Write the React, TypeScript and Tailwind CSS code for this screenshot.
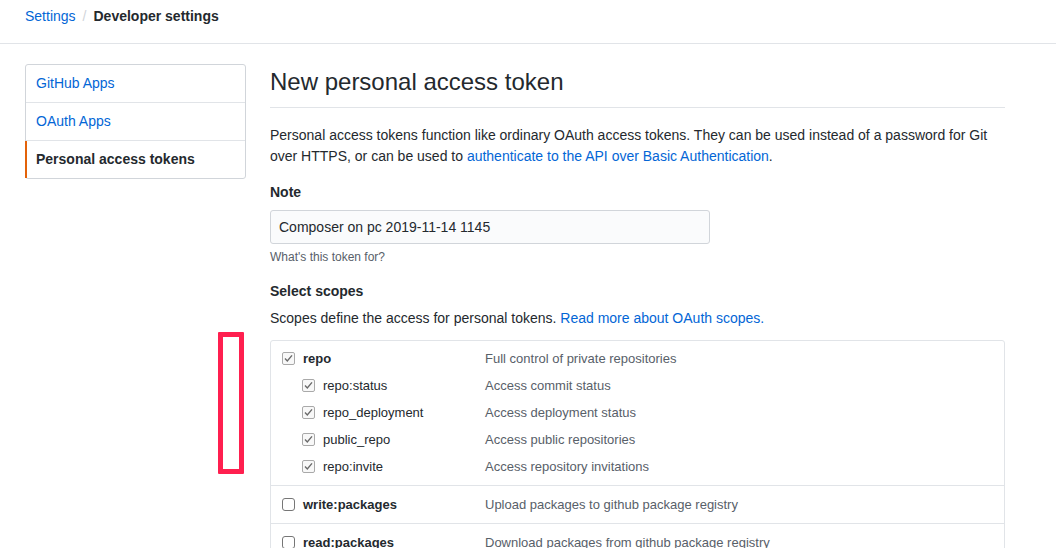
import React from "react";

const font = { fontFamily: '"Liberation Sans", Arial, Helvetica, sans-serif' };

function CheckedBox() {
  return (
    <svg width="13" height="13" viewBox="0 0 13 13" className="shrink-0">
      <rect x="0.5" y="0.5" width="12" height="12" rx="1.5" fill="#f8f8f8" stroke="#a9a9a9" />
      <path d="M3 6.6 L5.3 9 L10 3.4" fill="none" stroke="#6a6a6a" strokeWidth="1.4" />
    </svg>
  );
}

function EmptyBox() {
  return (
    <svg width="13" height="13" viewBox="0 0 13 13" className="shrink-0">
      <rect x="0.5" y="0.5" width="12" height="12" rx="2.5" fill="#ffffff" stroke="#767676" />
    </svg>
  );
}

type Row = { name: string; desc: string; checked: boolean; sub?: boolean };

function ScopeRow({ r }: { r: Row }) {
  return (
    <div className="flex items-center h-[27px] text-[13px]">
      <div className={`flex items-center w-[214px] ${r.sub ? "pl-[31px]" : "pl-[11px]"}`}>
        {r.checked ? <CheckedBox /> : <EmptyBox />}
        <span className={`ml-[8px] ${r.sub ? "text-[#24292e]" : "font-bold text-[#24292e]"}`}>{r.name}</span>
      </div>
      <span className="text-[#586069]">{r.desc}</span>
    </div>
  );
}

export default function App() {
  const repoGroup: Row[] = [
    { name: "repo", desc: "Full control of private repositories", checked: true },
    { name: "repo:status", desc: "Access commit status", checked: true, sub: true },
    { name: "repo_deployment", desc: "Access deployment status", checked: true, sub: true },
    { name: "public_repo", desc: "Access public repositories", checked: true, sub: true },
    { name: "repo:invite", desc: "Access repository invitations", checked: true, sub: true },
  ];
  return (
    <div style={font} className="relative w-[1056px] h-[548px] overflow-hidden bg-white text-[14px] leading-[1.5] text-[#24292e]">
      <div className="h-[44px] border-b border-[#e1e4e8] pl-[25px] pt-[6px] flex items-start">
        <span className="text-[#0366d6]">Settings</span>
        <span className="mx-[7px] text-[#d1d5da]">/</span>
        <span className="font-bold">Developer settings</span>
      </div>
      <div className="flex pt-[20px] pl-[25px]">
        <nav className="w-[221px] shrink-0 self-start border border-[#d1d5da] rounded-[3px]">
          <div className="px-[10px] py-[8px] border-b border-[#e1e4e8] text-[#0366d6]">GitHub Apps</div>
          <div className="px-[10px] py-[8px] border-b border-[#e1e4e8] text-[#0366d6]">OAuth Apps</div>
          <div className="relative px-[10px] py-[8px] font-bold">
            <span className="absolute left-[-1px] top-0 bottom-0 w-[2px] bg-[#e36209]" />
            Personal access tokens
          </div>
        </nav>
        <main className="ml-[24px] w-[735px]">
          <div className="border-b border-[#e1e4e8] pb-[7px]">
            <h1 className="text-[24px] leading-[36px] font-normal">New personal access token</h1>
          </div>
          <p className="mt-[17px]">
            Personal access tokens function like ordinary OAuth access tokens. They can be used instead of a password for Git over HTTPS, or can be used to{" "}
            <span className="text-[#0366d6]">authenticate to the API over Basic Authentication</span>.
          </p>
          <div className="mt-[15px]">
            <div className="font-bold">Note</div>
            <div className="mt-[7px] w-[440px] h-[34px] border border-[#d1d5da] rounded-[3px] bg-[#fafbfc] px-[8px] flex items-center">
              Composer on pc 2019-11-14 1145
            </div>
            <div className="mt-[4px] text-[12px] leading-[18px] text-[#586069]">What's this token for?</div>
          </div>
          <div className="mt-[15px]">
            <div className="font-bold">Select scopes</div>
            <div className="mt-[6px]">
              Scopes define the access for personal tokens.{" "}
              <span className="text-[#0366d6]">Read more about OAuth scopes.</span>
            </div>
            <div className="mt-[11px] border border-[#e1e4e8] rounded-[3px]">
              <div className="pt-[4px] pb-[5px] border-b border-[#e1e4e8]">
                {repoGroup.map((r) => (
                  <ScopeRow key={r.name} r={r} />
                ))}
              </div>
              <div className="pt-[5px] pb-[5px] border-b border-[#e1e4e8]">
                <ScopeRow r={{ name: "write:packages", desc: "Upload packages to github package registry", checked: false }} />
              </div>
              <div className="pt-[5px] pb-[5px]">
                <ScopeRow r={{ name: "read:packages", desc: "Download packages from github package registry", checked: false }} />
              </div>
            </div>
          </div>
        </main>
      </div>
      <div className="absolute left-[218px] top-[332px] w-[26px] h-[142px] border-[5px] border-[#ff1f4f] rounded-[1px]" />
    </div>
  );
}
